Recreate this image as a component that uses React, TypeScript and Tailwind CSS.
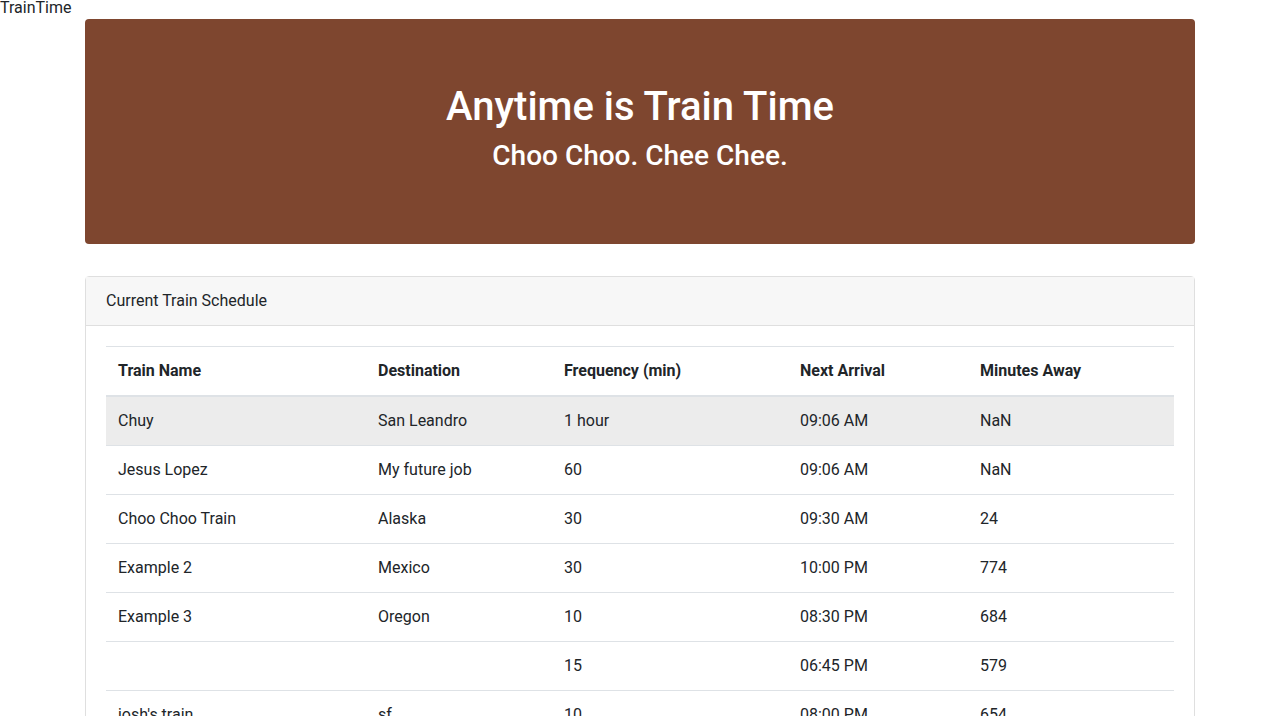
const trains = [
  { name: "Chuy", dest: "San Leandro", freq: "1 hour", next: "09:06 AM", away: "NaN" },
  { name: "Jesus Lopez", dest: "My future job", freq: "60", next: "09:06 AM", away: "NaN" },
  { name: "Choo Choo Train", dest: "Alaska", freq: "30", next: "09:30 AM", away: "24" },
  { name: "Example 2", dest: "Mexico", freq: "30", next: "10:00 PM", away: "774" },
  { name: "Example 3", dest: "Oregon", freq: "10", next: "08:30 PM", away: "684" },
  { name: "", dest: "", freq: "15", next: "06:45 PM", away: "579" },
  { name: "josh's train", dest: "sf", freq: "10", next: "08:00 PM", away: "654" },
]

export default function App() {
  return (
    <div className="min-h-screen bg-white text-[#212529] text-base" style={{ fontFamily: "Roboto, Inter, sans-serif" }}>
      <div className="h-[19px] leading-[16px]">TrainTime</div>

      <div className="w-[1110px] mx-auto">
        {/* Jumbotron */}
        <div className="bg-[#7e462f] rounded px-8 pt-16 pb-[63px] mb-8 text-white text-center">
          <h1 className="text-[40px] leading-[48px] font-medium mb-2">Anytime is Train Time</h1>
          <h3 className="text-[28px] leading-[34px] font-medium mb-2">Choo Choo. Chee Chee.</h3>
        </div>

        {/* Schedule card */}
        <div className="border border-[#dfdfdf] rounded">
          <div className="bg-[#f7f7f7] border-b border-[#dfdfdf] px-5 py-3 leading-6">Current Train Schedule</div>
          <div className="p-5">
            <table className="w-full border-collapse text-left">
              <thead>
                <tr className="border-t border-[#dee2e6] border-b-2">
                  <th className="w-[260px] px-3 py-3 leading-6 font-bold">Train Name</th>
                  <th className="w-[186px] px-3 py-3 leading-6 font-bold">Destination</th>
                  <th className="w-[236px] px-3 py-3 leading-6 font-bold">Frequency (min)</th>
                  <th className="w-[180px] px-3 py-3 leading-6 font-bold">Next Arrival</th>
                  <th className="px-3 py-3 leading-6 font-bold">Minutes Away</th>
                </tr>
              </thead>
              <tbody>
                {trains.map((t, i) => (
                  <tr key={i} className={`border-t border-[#dee2e6] ${i === 0 ? "bg-[#ececec]" : ""}`}>
                    <td className="px-3 py-3 leading-6">{t.name}</td>
                    <td className="px-3 py-3 leading-6">{t.dest}</td>
                    <td className="px-3 py-3 leading-6">{t.freq}</td>
                    <td className="px-3 py-3 leading-6">{t.next}</td>
                    <td className="px-3 py-3 leading-6">{t.away}</td>
                  </tr>
                ))}
              </tbody>
            </table>
          </div>
        </div>
      </div>
    </div>
  )
}
